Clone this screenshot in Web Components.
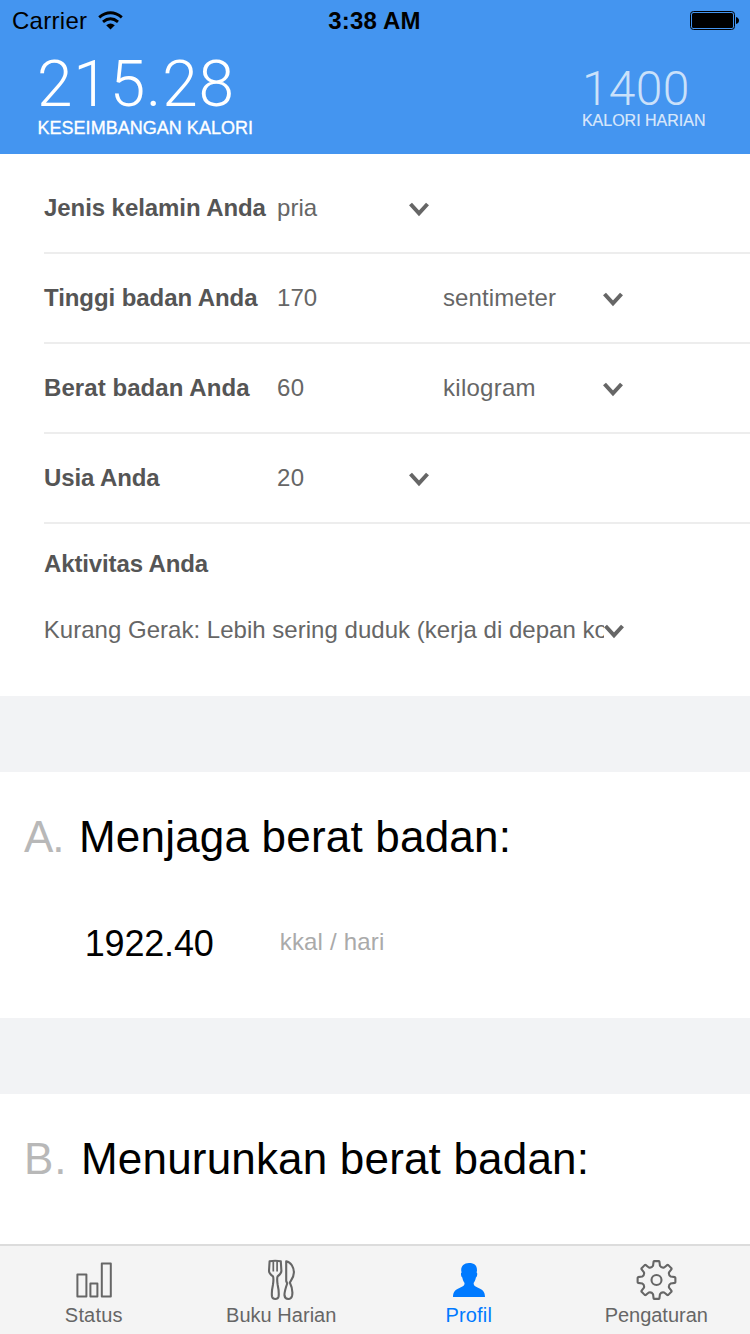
<!DOCTYPE html>
<html lang="id">
<head>
<meta charset="utf-8">
<title>Profil</title>
<style>
html,body{margin:0;height:100%;overflow:hidden;background:#fff}
body{font-family:"Liberation Sans",Arial,sans-serif}
</style>
</head>
<body>
<profile-app></profile-app>
<script>
const define = (name, markup, after) => customElements.define(name, class extends HTMLElement {
  connectedCallback() {
    if (this.shadowRoot) return;
    const root = this.attachShadow({mode: 'open'});
    root.innerHTML = typeof markup === 'function' ? markup(this) : markup;
    if (after) after(this);
  }
});

/* Text tracked to a given visible width. Measured at ten times the size for sub-pixel precision. */
define('fit-text', '<style>:host{display:block;white-space:pre;font-variant-ligatures:none;flex:none}</style><slot></slot>', el => {
  const w = +el.getAttribute('w');
  if (!w) return;
  const cs = getComputedStyle(el), c = document.createElement('canvas').getContext('2d');
  c.font = `${cs.fontWeight} ${parseFloat(cs.fontSize) * 10}px ${cs.fontFamily}`;
  const t = el.textContent, m = c.measureText(t);
  el.style.letterSpacing = (w - (m.actualBoundingBoxLeft + m.actualBoundingBoxRight) / 10) / (t.length - 1) + 'px';
});

define('chevron-icon', `<style>:host{display:block;width:20px;height:16px;flex:none}svg{display:block}</style>
<svg width="20" height="16" viewBox="0 0 20 16"><path d="M1.5 3L10 12.3L18.5 3" fill="none" stroke="#666" stroke-width="4"/></svg>`);

define('status-bar', `<style>
:host{display:grid;grid-template-columns:1fr auto 1fr;height:42px;align-items:center;padding:0 11px 0 12px;color:#000;font-size:24px;line-height:42px;box-sizing:border-box}
.l{display:flex;align-items:center;gap:11px}.r{justify-self:end}
svg{display:block}.l svg{margin-top:-2px}.r svg{margin-top:-1px}
.t{font-weight:bold;margin:0 1px 0 -1px}
</style>
<div class="l"><fit-text w="73.5">Carrier</fit-text><svg width="25" height="19" viewBox="0 0 25 19"><g fill="none" stroke="#000" stroke-width="3"><path d="M1.2 6.4Q12.5-2.8 23.8 6.4"/><path d="M5 10.8Q12.5 4.8 20 10.8"/></g><path d="M8.2 14.3Q12.5 10.7 16.8 14.3L12.5 18.6Z"/></svg></div>
<fit-text class="t" w="91">3:38 AM</fit-text>
<div class="r"><svg width="49" height="19" viewBox="0 0 49 19"><rect x=".5" y=".5" width="44" height="18" rx="3" fill="none" stroke="#000"/><rect x="2" y="2" width="41" height="15" rx="1.5"/><path d="M46 6q3 1 3 3.5T46 13Z"/></svg></div>`);

define('calorie-stat', el => `<style>
:host{display:block;color:#fff}
.n{font-family:Roboto,"Liberation Sans",sans-serif;font-weight:300;font-size:64px;line-height:64px;margin-left:-.5px}
.c{font-size:18px;line-height:20px;margin-top:1px;-webkit-text-stroke:.35px currentColor}
:host([small]){color:rgba(255,255,255,.78)}
:host([small]) .n{font-size:48px;line-height:48px;margin-left:0;color:rgba(255,255,255,.72)}
:host([small]) .c{font-size:16px;line-height:18px;margin-top:-1px;-webkit-text-stroke-width:.2px}
</style><fit-text class="n" w="${el.getAttribute('nw')}">${el.getAttribute('value')}</fit-text><fit-text class="c" w="${el.getAttribute('cw')}">${el.getAttribute('caption')}</fit-text>`);

define('calorie-header', `<style>
:host{display:block;height:154px;background:#4495f0}
.s{display:flex;justify-content:space-between;padding:11px 44.5px 0 37.5px}
[small]{margin-top:12px}
</style><status-bar></status-bar><div class="s"><calorie-stat value="215.28" nw="191.5" caption="KESEIMBANGAN KALORI" cw="212.5"></calorie-stat><calorie-stat small value="1400" nw="101" caption="KALORI HARIAN" cw="121"></calorie-stat></div>`);

define('profile-row', el => {
  const a = n => el.getAttribute(n);
  return `<style>
:host{display:grid;grid-template-columns:233px 1fr;height:90px;margin-left:44px;border-bottom:2px solid #ededed;box-sizing:border-box;align-items:center;font-size:24px;line-height:28px;color:#666}
.b{font-weight:bold;color:#555}
.v{display:grid;grid-template-columns:${a('unit') ? '166px 160px' : '132px'} 20px;align-items:center}
chevron-icon{margin-top:2px}
</style><fit-text class="b" w="${a('lw')}">${a('label')}</fit-text><div class="v"><fit-text w="${a('vw')}">${a('value')}</fit-text>${a('unit') ? `<fit-text w="${a('uw')}">${a('unit')}</fit-text>` : ''}<chevron-icon></chevron-icon></div>`;
});

define('activity-field', `<style>
:host{display:block;height:172px;padding:26px 0 0 44px;box-sizing:border-box;font-size:24px;line-height:28px;color:#666}
.b{font-weight:bold;color:#555}
.f{display:flex;align-items:center;margin-top:38px}
.x{width:560px;overflow:hidden}
chevron-icon{margin-top:2px}
</style><fit-text class="b" w="164.7">Aktivitas Anda</fit-text><div class="f"><div class="x"><fit-text style="letter-spacing:.02px;margin-left:-.2px">Kurang Gerak: Lebih sering duduk (kerja di depan komputer)</fit-text></div><chevron-icon></chevron-icon></div>`);

define('result-card', el => {
  const a = n => el.getAttribute(n);
  return `<style>
:host{display:block;height:322px;border-top:76px solid #f2f3f5;box-sizing:border-box;padding:40px 0 0 24px}
.h{display:flex;font-size:44px;line-height:50px;color:#000}
.l{width:${a('gap')}px;color:#b8b8b8}
.r{display:flex;align-items:center;padding:61px 0 0 60.7px;font-size:36px;line-height:42px}
.u{font-size:24px;color:#aaa;line-height:28px;margin-top:-4px}
.q{width:195px}
</style><div class="h"><fit-text class="l" w="${a('letterw')}">${a('letter')}.</fit-text><fit-text w="${a('tw')}">${a('heading')}</fit-text></div>${a('value') ? `<div class="r"><fit-text class="q" w="126">${a('value')}</fit-text><fit-text class="u" w="101.5">kkal / hari</fit-text></div>` : ''}`;
});

define('tab-item', el => `<style>
:host{display:flex;flex-direction:column;align-items:center;flex:1;color:#666;font-size:20px;line-height:24px;padding-top:13px}
:host([active]){color:#007aff}
::slotted(svg){display:block;width:42px;height:42px}
fit-text{margin-top:2px}
</style><slot></slot><fit-text w="${el.getAttribute('w')}">${el.getAttribute('label')}</fit-text>`);

const gear = (() => {
  let d = '';
  for (let i = 0; i < 8; i++) {
    const p = (r, deg) => { const t = (i * 45 + deg - 90) * Math.PI / 180; return (21.5 + r * Math.cos(t)).toFixed(2) + ' ' + (21 + r * Math.sin(t)).toFixed(2); };
    d += `${i ? 'L' : 'M'}${p(14.7, -13.5)}L${p(18.6, -9)}Q${p(19, -8)} ${p(19, -6.5)}L${p(19, 6.5)}Q${p(19, 8)} ${p(18.6, 9)}L${p(14.7, 13.5)}Q${p(12.8, 22.5)} ${p(14.7, 31.5)}`;
  }
  return d + 'Z';
})();

define('tab-bar', `<style>
:host{display:flex;height:90px;border-top:2px solid #dcdcdc;box-sizing:border-box;background:#f4f4f4;position:absolute;left:0;right:0;bottom:0}
</style>
<tab-item label="Status" w="56"><svg viewBox="0 0 42 42"><g fill="none" stroke="#666" stroke-width="2" stroke-linejoin="round"><path d="M4.4 15.5h9v22h-9zM17.4 24.5h7v13h-7zM28.8 4.5h9v33h-9z"/></g></svg></tab-item>
<tab-item label="Buku Harian" w="107.5"><svg viewBox="0 0 42 42"><g fill="none" stroke="#666" stroke-width="2.1" stroke-linejoin="round"><path d="M9.6 2.2Q15.2 1.2 20.8 2.2L21.4 12Q21.4 14.5 17.6 17.4Q16.7 20 17.7 26Q19.2 33 18.6 37.5Q18 40 15.3 40Q12.6 40 12 37.5Q11.4 33 12.9 26Q13.9 20 13 17.4Q9 14.5 9 12Z"/><path d="M13.3 2.5v10M17.1 2.5v10" stroke-width="1.7"/><path d="M26.2 2.2C31 3 33.9 8.5 33.9 13.5C33.9 18 32 20 29.8 23.5C32.5 29 32.8 33.5 32 37Q31.2 40 28.4 40Q25 40 24.5 36.5Q24.2 33 27.2 24.5L26.2 22Z"/></g></svg></tab-item>
<tab-item active label="Profil" w="43.5"><svg viewBox="0 0 42 42"><path fill="#007aff" d="M21 4C26.5 4 29.1 6.6 29 11.5L28.6 13.5C29.8 13.7 29.2 18 27.9 18.6C27.5 21 26.5 22.8 25.6 24C25.6 26.8 27.2 27.5 30 28.7C34.5 30.4 37 32.7 37 38H5C5 32.7 7.5 30.4 12 28.7C14.8 27.5 16.6 26.8 16.6 24C15.7 22.8 14.7 21 14.3 18.6C13 18 12.4 13.7 13.6 13.5L13.2 11.5C13.1 6.6 16 4.3 21 4Z"/></svg></tab-item>
<tab-item label="Pengaturan" w="100.4"><svg viewBox="0 0 42 42"><g fill="none" stroke="#666" stroke-width="2.1" stroke-linejoin="round"><path d="${gear}"/><circle cx="21.5" cy="21" r="5"/></g></svg></tab-item>`);

define('profile-app', `<style>
:host{display:block;position:relative;height:1334px;overflow:hidden;background:#fff}
.rows{padding-top:10px}
</style>
<calorie-header></calorie-header>
<div class="rows">
<profile-row label="Jenis kelamin Anda" lw="222.7" value="pria" vw="38.7"></profile-row>
<profile-row label="Tinggi badan Anda" lw="214.4" value="170" vw="37.5" unit="sentimeter" uw="112"></profile-row>
<profile-row label="Berat badan Anda" lw="205" value="60" vw="25" unit="kilogram" uw="89.5"></profile-row>
<profile-row label="Usia Anda" lw="115.3" value="20" vw="25"></profile-row>
</div>
<activity-field></activity-field>
<result-card letter="A" letterw="36.5" gap="55" heading="Menjaga berat badan:" tw="424.5" value="1922.40"></result-card>
<result-card letter="B" letterw="35" gap="57" heading="Menurunkan berat badan:" tw="500.5"></result-card>
<tab-bar></tab-bar>`);
</script>
</body>
</html>
